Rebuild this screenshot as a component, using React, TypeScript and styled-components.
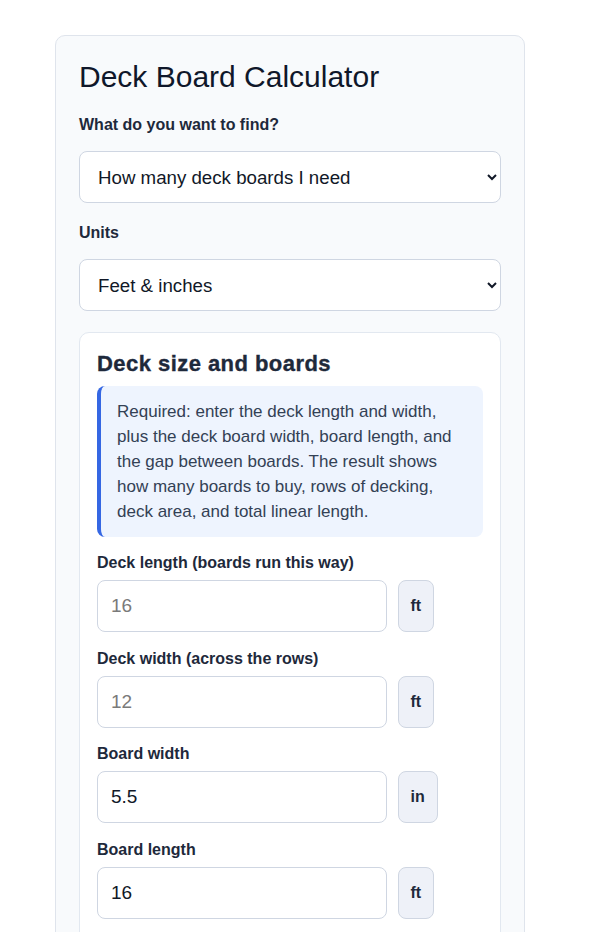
import React from "react";
import styled, { createGlobalStyle } from "styled-components";

const Global = createGlobalStyle`
  html, body { margin: 0; padding: 0; background: #ffffff; }
  body { font-family: "Liberation Sans", Arial, sans-serif; color: #1e293b; }
  * { box-sizing: border-box; }
`;

const Page = styled.div`
  padding: 35px 0 0 55px;
`;

const Card = styled.div`
  width: 470px;
  background: #f8fafc;
  border: 1px solid #dfe4ec;
  border-radius: 10px;
  padding: 23px 23px 40px;
`;

const Title = styled.h1`
  margin: 0 0 21px;
  font-size: 30px;
  line-height: 36px;
  font-weight: 400;
  color: #0f172a;
`;

const TopField = styled.div`
  display: flex;
  flex-direction: column;
  margin-bottom: 21px;
`;

const TopLabel = styled.label`
  font-size: 16px;
  line-height: 18px;
  font-weight: 700;
  color: #1e293b;
  margin-bottom: 17px;
`;

const Select = styled.select`
  height: 52px;
  width: 100%;
  border: 1px solid #cfd6e2;
  border-radius: 8px;
  background: #ffffff;
  padding: 0 14px;
  font-family: "Liberation Sans", Arial, sans-serif;
  font-size: 18.7px;
  color: #111827;
`;

const Section = styled.section`
  background: #ffffff;
  border: 1px solid #e2e8f0;
  border-radius: 10px;
  padding: 17px 17px 40px;
`;

const SectionTitle = styled.h2`
  margin: 0 0 8px;
  font-size: 22px;
  line-height: 28px;
  font-weight: 700;
  letter-spacing: 0.45px;
  -webkit-text-stroke: 0.35px #1e293b;
  color: #1e293b;
`;

const Info = styled.p`
  margin: 0 0 17px;
  background: #eef4fe;
  border-left: 4px solid #3567e3;
  border-radius: 8px;
  padding: 13px 16px;
  font-size: 17px;
  line-height: 25px;
  color: #334155;
`;

const Field = styled.div`
  display: flex;
  flex-direction: column;
  margin-bottom: 17.5px;
`;

const FieldLabel = styled.label`
  font-size: 16px;
  line-height: 18px;
  font-weight: 700;
  color: #1e293b;
  margin-bottom: 8px;
`;

const InputRow = styled.div`
  display: flex;
  gap: 11px;
  align-items: stretch;
`;

const Input = styled.input`
  width: 75%;
  height: 52px;
  border: 1px solid #cfd6e2;
  border-radius: 8px;
  background: #ffffff;
  padding: 0 13px;
  font-family: "Liberation Sans", Arial, sans-serif;
  font-size: 19px;
  color: #111827;
  &::placeholder { color: #7a7a7a; }
`;

const Unit = styled.span`
  height: 52px;
  display: flex;
  align-items: center;
  justify-content: center;
  padding: 0 12px;
  background: #eef1f8;
  border: 1px solid #cfd6e2;
  border-radius: 8px;
  font-size: 16px;
  font-weight: 700;
  color: #1e293b;
`;

const fields = [
  { label: "Deck length (boards run this way)", placeholder: "16", value: "", unit: "ft" },
  { label: "Deck width (across the rows)", placeholder: "12", value: "", unit: "ft" },
  { label: "Board width", placeholder: "5.5", value: "5.5", unit: "in" },
  { label: "Board length", placeholder: "16", value: "16", unit: "ft" },
  { label: "Gap between boards", placeholder: "0.1875", value: "0.1875", unit: "in" },
];

export default function App() {
  return (
    <>
      <Global />
      <Page>
        <Card>
          <Title>Deck Board Calculator</Title>
          <TopField>
            <TopLabel htmlFor="find">What do you want to find?</TopLabel>
            <Select id="find" defaultValue="boards">
              <option value="boards">How many deck boards I need</option>
              <option value="area">Deck area</option>
            </Select>
          </TopField>
          <TopField>
            <TopLabel htmlFor="units">Units</TopLabel>
            <Select id="units" defaultValue="ft">
              <option value="ft">Feet &amp; inches</option>
              <option value="m">Metric</option>
            </Select>
          </TopField>
          <Section>
            <SectionTitle>Deck size and boards</SectionTitle>
            <Info>
              Required: enter the deck length and width, plus the deck board width, board length, and the gap
              between boards. The result shows how many boards to buy, rows of decking, deck area, and total
              linear length.
            </Info>
            {fields.map((f, i) => (
              <Field key={i}>
                <FieldLabel htmlFor={`f${i}`}>{f.label}</FieldLabel>
                <InputRow>
                  <Input id={`f${i}`} placeholder={f.placeholder} defaultValue={f.value} />
                  <Unit>{f.unit}</Unit>
                </InputRow>
              </Field>
            ))}
          </Section>
        </Card>
      </Page>
    </>
  );
}
